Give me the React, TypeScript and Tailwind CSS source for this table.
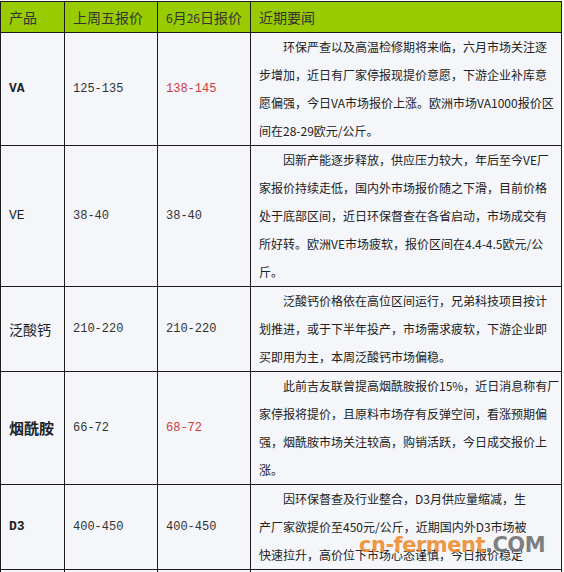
const ROWS = [
  {
    name: 'VA',
    nameCls: 'font-bold text-[13px] font-mono',
    last: '125-135',
    now: '138-145',
    up: true,
    lines: [
      '环保严查以及高温检修期将来临，六月市场关注逐',
      '步增加，近日有厂家停报现提价意愿，下游企业补库意',
      '愿偏强，今日VA市场报价上涨。欧洲市场VA1000报价区',
      '间在28-29欧元/公斤。',
    ],
  },
  {
    name: 'VE',
    nameCls: 'text-[13px] font-mono',
    last: '38-40',
    now: '38-40',
    up: false,
    lines: [
      '因新产能逐步释放，供应压力较大，年后至今VE厂',
      '家报价持续走低，国内外市场报价随之下滑，目前价格',
      '处于底部区间，近日环保督查在各省启动，市场成交有',
      '所好转。欧洲VE市场疲软，报价区间在4.4-4.5欧元/公',
      '斤。',
    ],
  },
  {
    name: '泛酸钙',
    nameCls: 'text-[14px]',
    last: '210-220',
    now: '210-220',
    up: false,
    lines: [
      '泛酸钙价格依在高位区间运行，兄弟科技项目按计',
      '划推进，或于下半年投产，市场需求疲软，下游企业即',
      '买即用为主，本周泛酸钙市场偏稳。',
    ],
  },
  {
    name: '烟酰胺',
    nameCls: 'text-[15px] font-bold',
    last: '66-72',
    now: '68-72',
    up: true,
    lines: [
      '此前吉友联曾提高烟酰胺报价15%，近日消息称有厂',
      '家停报将提价，且原料市场存有反弹空间，看涨预期偏',
      '强，烟酰胺市场关注较高，购销活跃，今日成交报价上',
      '涨。',
    ],
  },
  {
    name: 'D3',
    nameCls: 'font-bold text-[13px] font-mono',
    last: '400-450',
    now: '400-450',
    up: false,
    lines: [
      '因环保督查及行业整合，D3月供应量缩减，生',
      '产厂家欲提价至450元/公斤，近期国内外D3市场被',
      '快速拉升，高价位下市场心态谨慎，今日报价稳定',
    ],
  },
]

const cell = 'border border-[#1c1c1c] px-2 align-middle'

export default function App() {
  return (
    <div className="relative w-[564px] h-[572px] overflow-hidden bg-white pt-[1px] [font-family:'Noto_Sans_CJK_SC',sans-serif] text-[#222]">
      <table className="w-[561px] table-fixed border-collapse bg-[#f4f6fa]">
        <colgroup>
          <col className="w-[64px]" />
          <col className="w-[93px]" />
          <col className="w-[93px]" />
          <col className="w-[311px]" />
        </colgroup>
        <thead>
          <tr className="h-[31px] bg-[#99cc00] text-[14px] text-[#333] leading-none">
            <th className={`${cell} text-left font-normal whitespace-nowrap`}>产品</th>
            <th className={`${cell} text-left font-normal whitespace-nowrap`}>上周五报价</th>
            <th className={`${cell} text-left font-normal whitespace-nowrap`}>
              <span className="text-[12px]">6</span>月<span className="text-[12px]">26</span>日报价
            </th>
            <th className={`${cell} text-left font-normal whitespace-nowrap`}>近期要闻</th>
          </tr>
        </thead>
        <tbody>
          {ROWS.map(r => (
            <tr key={r.name}>
              <td className={`${cell} ${r.nameCls}`}>{r.name}</td>
              <td className={`${cell} text-[12px] text-[#333] font-mono`}>{r.last}</td>
              <td className={`${cell} text-[12px] font-mono ${r.up ? 'text-[#cc3b3b]' : 'text-[#333]'}`}>
                {r.now}
              </td>
              <td className={`${cell} py-0 text-[12px] leading-[28px]`}>
                {r.lines.map((l, i) => (
                  <div key={i} className={`whitespace-nowrap ${i === 0 ? 'pl-6' : ''}`}>
                    {l}
                  </div>
                ))}
              </td>
            </tr>
          ))}
          <tr className="h-[40px]">
            <td className={cell}></td>
            <td className={cell}></td>
            <td className={cell}></td>
            <td className={cell}></td>
          </tr>
        </tbody>
      </table>

      {/* site watermark */}
      <div className="absolute left-[359px] top-[535px] flex items-baseline text-[21px] font-bold leading-none tracking-[-0.5px] [font-family:'DejaVu_Sans',sans-serif]">
        <span className="text-[#f08a2c]/90">cn-ferment</span>
        <span className="text-[#6f6f6f]/90">.COM</span>
      </div>
    </div>
  )
}
